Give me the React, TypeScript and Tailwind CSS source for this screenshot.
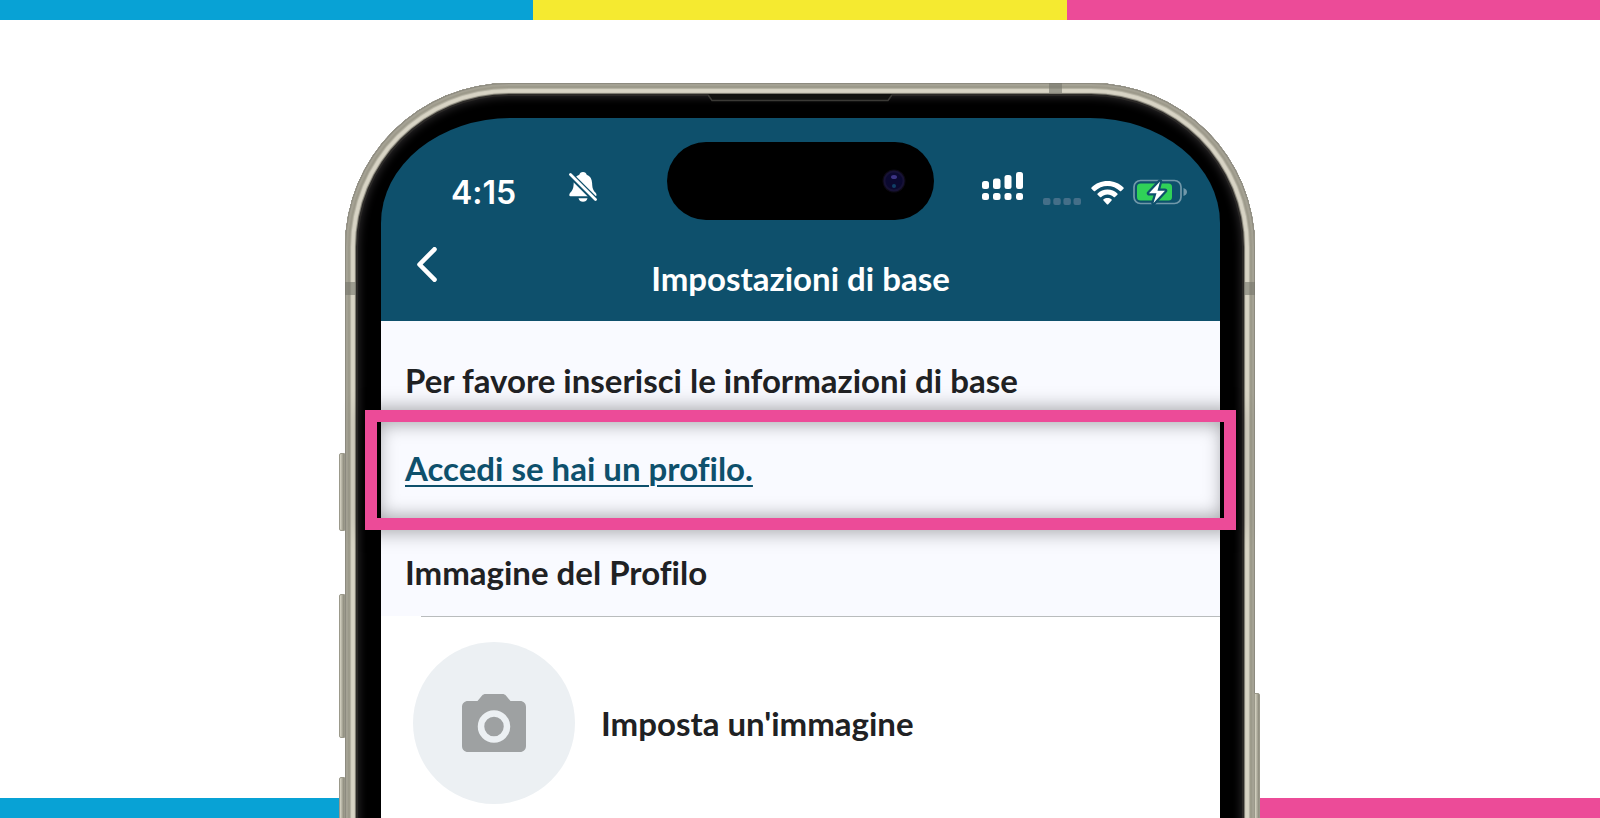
import React from "react";

function BellOffIcon() {
  return (
    <svg className="w-[28px] h-[30px]" viewBox="0 0 28 30" fill="none" aria-hidden="true">
      <path
        d="M14 0c-2 0-3.400 1.200-3.700 2.800C6.600 4 4.900 7 4.700 11c-.2 5.200-1 7-3.300 9.600-1.700 2-1.500 3.700.8 3.700h23.400c2.300 0 2.500-1.700.8-3.700-2.300-2.600-3.100-4.400-3.300-9.600-.2-4-1.900-7-5.400-8.200C17.400 1.200 16 0 14 0Z"
        fill="white"
      />
      <path d="M9.500 26.200h9c-.5 2.300-2.300 3.600-4.500 3.600s-4-1.300-4.500-3.600Z" fill="white" />
      <path d="M1 2.500 26.500 28" stroke="#0e506c" strokeWidth="6" />
      <path d="M1.500 2.500 26.500 27.500" stroke="white" strokeWidth="2.800" strokeLinecap="round" />
    </svg>
  );
}

function SignalIcon() {
  return (
    <svg className="w-[41px] h-[28px]" viewBox="0 0 41 28" fill="white" aria-hidden="true">
      <rect x="0" y="9" width="7" height="8" rx="2.500" />
      <rect x="11" y="6.500" width="7.500" height="10.500" rx="2.500" />
      <rect x="22.500" y="3" width="7" height="14" rx="2.500" />
      <rect x="34" y="0" width="7" height="17" rx="2.500" />
      <rect x="0" y="21" width="7" height="7" rx="2.500" />
      <rect x="11" y="21" width="7.500" height="7" rx="2.500" />
      <rect x="22.500" y="21" width="7" height="7" rx="2.500" />
      <rect x="34" y="21" width="7" height="7" rx="2.500" />
    </svg>
  );
}

function NoServiceIcon() {
  return (
    <svg className="w-[38px] h-[7px]" viewBox="0 0 38 7" fill="#446f89" aria-hidden="true">
      <rect x="0" y="0" width="7.500" height="7" rx="2" />
      <rect x="10.300" y="0" width="7.500" height="7" rx="2" />
      <rect x="20.400" y="0" width="7.500" height="7" rx="2" />
      <rect x="30.500" y="0" width="7.500" height="7" rx="2" />
    </svg>
  );
}

function WifiIcon() {
  return (
    <svg className="w-[33px] h-[24px]" viewBox="0 0 33 24" aria-hidden="true">
      <path
        d="M16.500 0C10.300 0 4.700 2.400.5 6.400c-.4.400-.4.900 0 1.300L2.800 10c.4.400.9.400 1.300 0 3.300-3.100 7.600-5 12.400-5s9.100 1.900 12.400 5c.4.400.9.400 1.300 0l2.300-2.300c.4-.4.400-.9 0-1.300C28.300 2.400 22.700 0 16.500 0Z"
        fill="white"
      />
      <path
        d="M16.500 8.500c-3.800 0-7.300 1.500-9.900 3.900-.4.400-.4.900 0 1.300l2.400 2.300c.3.400.9.400 1.300 0 1.600-1.500 3.800-2.400 6.200-2.400s4.600.9 6.200 2.400c.4.400 1 .4 1.300 0l2.400-2.300c.4-.4.400-.9 0-1.300-2.600-2.400-6.100-3.900-9.900-3.900Z"
        fill="white"
      />
      <path
        d="M16.500 16.900c-1.500 0-2.900.5-4 1.400-.4.400-.4.900 0 1.300l3.400 3.700c.4.400.9.400 1.300 0l3.400-3.700c.3-.4.300-.9-.1-1.300-1.100-.9-2.500-1.400-4-1.400Z"
        fill="white"
      />
    </svg>
  );
}

function BatteryIcon() {
  return (
    <svg className="w-[54px] h-[26px]" viewBox="0 0 54 26" fill="none" aria-hidden="true">
      <rect x="1" y="1.500" width="47" height="23" rx="6.500" stroke="#7198aa" strokeWidth="1.700" />
      <path d="M50.500 9c2.200.7 3.500 2.200 3.500 4s-1.300 3.300-3.500 4V9Z" fill="#7198aa" />
      <rect x="4" y="4.500" width="35" height="17" rx="3.500" fill="#30d158" />
      <path
        d="M27 2.500 16 14.300h7.500L20.500 24l11.500-12.300h-7.500L27 2.500Z"
        fill="white"
        stroke="#0e506c"
        strokeWidth="4.500"
        strokeLinejoin="round"
      />
      <path d="M27 2.500 16 14.300h7.500L20.500 24l11.500-12.300h-7.500L27 2.500Z" fill="white" />
    </svg>
  );
}

function ChevronIcon() {
  return (
    <svg className="w-[20px] h-[35px]" viewBox="0 0 20 35" fill="none" aria-hidden="true">
      <path
        d="M17.500 2.300 2.500 17.500l15 15.200"
        stroke="white"
        strokeWidth="4.600"
        strokeLinecap="round"
        strokeLinejoin="round"
      />
    </svg>
  );
}

function CameraIcon() {
  return (
    <svg className="w-[64px] h-[58px]" viewBox="0 0 64 58" aria-hidden="true">
      <path
        d="M23.500 0h17c1.300 0 2.500.5 3.400 1.500L48.500 7H58c3.500 0 6 2.500 6 6v39c0 3.500-2.500 6-6 6H6c-3.500 0-6-2.500-6-6V13c0-3.500 2.500-6 6-6h9.500l4.600-5.500c.9-1 2.100-1.500 3.400-1.500Z"
        fill="#9ea1a2"
      />
      <circle cx="32" cy="32.500" r="13" fill="none" stroke="#ecf0f3" strokeWidth="6.500" />
    </svg>
  );
}

function ColorBar() {
  return (
    <div className="grid grid-cols-3 h-5 shrink-0">
      <div className="bg-[#08a2d5]"></div>
      <div className="bg-[#f5ea30]"></div>
      <div className="bg-[#ec4b98]"></div>
    </div>
  );
}

// Side keys, antenna bands and speaker slit sitting on the metal frame
function FrameDetails() {
  const key =
    "absolute w-[6px] border border-[#9b998b] bg-gradient-to-r from-[#d9d6c6] to-[#8b897b]";

  return (
    <div aria-hidden="true">
      <div className={`${key} -left-[6px] top-[370px] h-[78px] rounded-l-xs`}></div>
      <div className={`${key} -left-[6px] top-[511px] h-[144px] rounded-l-xs`}></div>
      <div className={`${key} -left-[6px] top-[694px] h-[144px] rounded-l-xs`}></div>
      <div className={`${key} -right-[5px] top-[610px] h-[228px] rounded-r-xs`}></div>
      <div className="absolute left-0 top-[199px] w-[11px] h-[13px] bg-[#77766c]/60"></div>
      <div className="absolute right-0 top-[199px] w-[11px] h-[13px] bg-[#77766c]/60"></div>
      <div className="absolute right-[193px] top-0 w-[13px] h-[10px] bg-[#77766c]/60"></div>
      <svg
        className="absolute left-1/2 -translate-x-1/2 top-[11px] w-[184px] h-[8px]"
        viewBox="0 0 184 8"
      >
        <path d="M0 0h184l-5 6H5L0 0Z" fill="#121210" />
        <path d="M0 1l4 5.500h176l4-5.500" fill="none" stroke="#3b3a36" strokeWidth="1.500" />
      </svg>
    </div>
  );
}

function DynamicIsland() {
  return (
    <div className="flex items-center justify-end h-[78px] pr-[28px] rounded-full bg-black">
      <svg className="w-[24px] h-[24px]" viewBox="0 0 24 24" aria-hidden="true">
        <circle cx="12" cy="12" r="11.500" fill="#0d0a15" />
        <circle cx="12" cy="12" r="9.500" fill="#0b0930" stroke="#171236" strokeWidth="2" />
        <ellipse cx="12" cy="8" rx="3" ry="2" fill="#3c3484" />
        <circle cx="12" cy="17" r="2" fill="#103f66" />
      </svg>
    </div>
  );
}

function StatusBar() {
  return (
    <div className="grid grid-cols-[1fr_267px_1fr]">
      <div className="flex items-start pt-[30px] pl-[70px] gap-[53px]">
        <time className="pt-px font-['Inter',sans-serif] text-[32px] leading-[40px] font-semibold">
          4:15
        </time>
        <BellOffIcon />
      </div>
      <DynamicIsland />
      <div className="flex items-start pt-[30px] pl-12">
        <SignalIcon />
        <div className="flex items-end h-[33px] pl-[20px]">
          <NoServiceIcon />
          <div className="flex items-end gap-[9px] pl-[10px]">
            <WifiIcon />
            <BatteryIcon />
          </div>
        </div>
      </div>
    </div>
  );
}

export default function App() {
  return (
    <div className="h-screen flex flex-col overflow-hidden bg-white font-['Lato',sans-serif] text-[33px] leading-[40px] font-bold text-[#202123] [font-variant-ligatures:none]">
      <ColorBar />

      <div className="flex-1 min-h-0"></div>
      <ColorBar />

      {/* Phone runs past the bottom edge of the page */}
      <div className="absolute inset-x-0 top-0 h-screen overflow-hidden pt-[83px] px-4">
        <div className="relative w-full max-w-[910px] min-h-full mx-auto pt-[35px] pl-[36px] pr-[35px] rounded-t-[164px] bg-black shadow-[inset_0_0_0_1px_#8d8b80,inset_0_0_1px_3px_#a5a294,inset_0_0_1px_5px_#9c998a,inset_0_0_1px_6px_#b5b2a3,inset_0_0_1px_10px_#d8d4c5,inset_0_0_0_11px_#77756b,inset_0_0_0_13px_#2b2927,inset_0_0_8px_14px_#2b292b]">
          <FrameDetails />

          <header className="pt-6 bg-[#0e506c] text-white [border-radius:130px_130px_0_0/105px_105px_0_0]">
            <StatusBar />
            <div className="grid grid-cols-[1fr_auto_1fr] items-start h-[101px]">
              <button type="button" aria-label="Indietro" className="w-fit pl-[36px] pt-[27px]">
                <ChevronIcon />
              </button>
              <h1 className="pt-[38px]">Impostazioni di base</h1>
            </div>
          </header>

          <main className="bg-white">
            <div className="bg-[#f9faff]">
              <p className="pt-[39px] pb-[10px] pl-6">
                Per favore inserisci le informazioni di base
              </p>

              <div className="h-[120px] -mx-4 pt-[26px] pl-[28px] border-12 border-[#ec4b98] shadow-[0_0_18px_2px_rgba(0,0,0,0.35),inset_0_0_18px_2px_rgba(0,0,0,0.35)]">
                <a
                  href="#accedi"
                  className="text-[#0e506c] underline decoration-2 underline-offset-4"
                >
                  Accedi se hai un profilo.
                </a>
              </div>

              <h2 className="pt-[22px] pb-[24px] pl-6">Immagine del Profilo</h2>
            </div>

            <div className="ml-10 border-t border-[#b9bcbd]"></div>
            <button type="button" className="flex items-center w-full gap-[26px] pt-[25px] pl-8">
              <span className="flex items-center justify-center w-[162px] h-[162px] rounded-full bg-[#ecf0f3]">
                <CameraIcon />
              </span>
              Imposta un'immagine
            </button>
            <div className="h-10"></div>
          </main>
        </div>
      </div>
    </div>
  );
}
